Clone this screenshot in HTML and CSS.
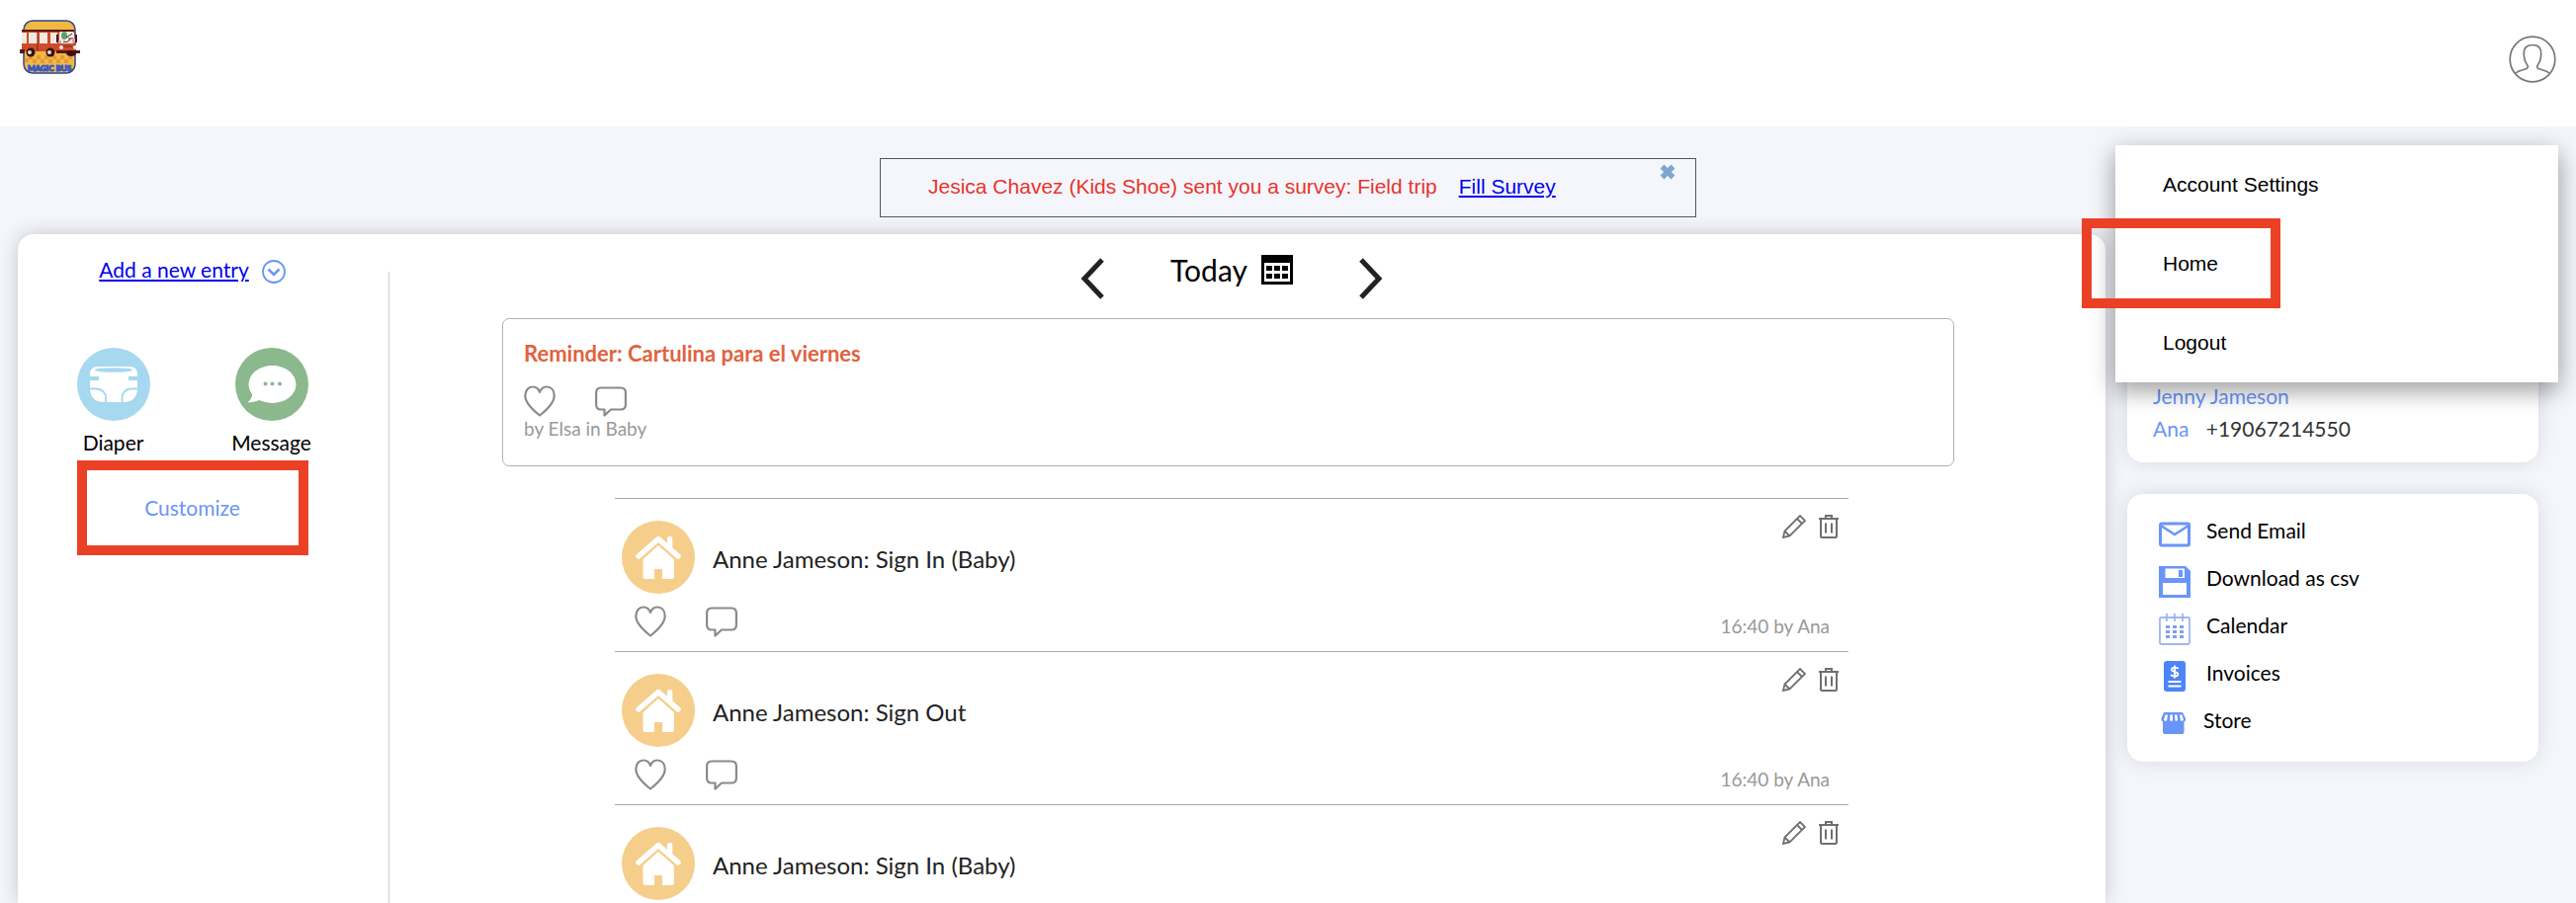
FILE: index.html
```html
<!DOCTYPE html>
<html lang="en">
<head>
    <meta charset="UTF-8">
    <meta name="viewport" content="width=device-width, initial-scale=1.0">
    <title>Magic Bus</title>
    <link rel="stylesheet" href="styles.css">
</head>
<body>
    <!-- shared icons -->
    <svg class="sprite" aria-hidden="true">
        <symbol id="heart" viewBox="0 0 32 32">
            <path d="M16 30.500C9 25 1.300 18 1.300 10.500C1.300 5 4.500 1.500 9 1.500C12.300 1.500 14.800 3.500 16 7C17.200 3.500 19.700 1.500 23 1.500C27.500 1.500 30.700 5 30.700 10.500C30.700 18 23 25 16 30.500Z" fill="none" stroke="#8a8a8a" stroke-width="2.200" stroke-linejoin="round"/>
        </symbol>
        <symbol id="comment" viewBox="0 0 32 32">
            <path d="M6 2.500H26Q30.900 2.500 30.900 7.500V19.500Q30.900 24.500 26 24.500H16L9.500 30.500V24.500H6Q1.100 24.500 1.100 19.500V7.500Q1.100 2.500 6 2.500Z" fill="none" stroke="#8a8a8a" stroke-width="2.200" stroke-linejoin="round"/>
        </symbol>
        <symbol id="pencil" viewBox="0 0 24 24">
            <path d="M1 23L2.500 16.500L18 1L23 6L7.500 21.500ZM15 4L20 9M2.500 16.500L7.500 21.500" fill="none" stroke="#6f6f6f" stroke-width="1.800"/>
        </symbol>
        <symbol id="trash" viewBox="0 0 20 24">
            <path d="M0 4H20M7 4V1H13V4M2 4V21.500Q2 23 3.500 23H16.500Q18 23 18 21.500V4M7 8.500V18.500M13 8.500V18.500" fill="none" stroke="#6f6f6f" stroke-width="2"/>
        </symbol>
        <symbol id="house" viewBox="0 0 74 74">
            <circle cx="37" cy="37" r="37" fill="#f6ce8b"/>
            <path d="M17 36L37 18.500L57 36" fill="none" stroke="#fff" stroke-width="5.500" stroke-linecap="round" stroke-linejoin="round"/>
            <path d="M46 18Q46 16 48 16H49.500Q51.300 16 51.300 18V29L46 24Z" fill="#fff"/>
            <path d="M21.500 39L37 25L52.800 39V57Q52.800 59 51 59H41V49H33V59H23.500Q21.500 59 21.500 57Z" fill="#fff"/>
        </symbol>
        <symbol id="chevron" viewBox="0 0 26 42">
            <path d="M23 2L5 21L23 40" fill="none" stroke="#222" stroke-width="5"/>
        </symbol>
    </svg>

    <header class="header">
        <a href="#" class="logo" aria-label="Magic Bus">
            <svg width="61" height="56" viewBox="0 0 61 56">
                <rect x="4" y="1" width="52" height="53" rx="9" fill="#efb942" stroke="#35458a" stroke-width="1.500"/>
                <path d="M9 36h4v4h-4zM17 36h4v4h-4zM25 36h4v4h-4zM33 36h4v4h-4zM41 36h4v4h-4zM49 36h4v4h-4zM5 39h4v4h-4zM13 40h4v4h-4zM21 40h4v4h-4zM29 40h4v4h-4zM37 40h4v4h-4zM45 40h4v4h-4z" fill="#e8973c"/>
                <path d="M2 10H55L57 32H2Z" fill="#ce4c2b"/>
                <path d="M2 10H55V12H2ZM0 30H5V34H0ZM37 31H61V34H37Z" fill="#5a1712"/>
                <path d="M2 13H7V24H2ZM9 13H18V24H9ZM20 13H28V24H20ZM31 13H38V24H31Z" fill="#f3e9e0"/>
                <rect x="40" y="12" width="15" height="12" rx="2" fill="#f7ece6"/>
                <path d="M37 15h2v8h-2zM56 15h2v8h-2z" fill="#4a1512"/>
                <ellipse cx="45" cy="16" rx="3" ry="4" fill="#55a36a"/>
                <path d="M44 22Q48 24 51 20M47 18L53 14M49 19H54" stroke="#4a1512" fill="none"/>
                <path d="M39 21h3v3h-3zM53 19h3v4h-3z" fill="#dc9cc0"/>
                <path d="M43 27H53M18 12V31" stroke="#7c211a"/>
                <circle cx="11" cy="33" r="4.500" fill="#38120f"/><circle cx="10" cy="33" r="2" fill="#e9ddd2"/>
                <circle cx="31" cy="33" r="4.500" fill="#38120f"/><circle cx="30" cy="33" r="2" fill="#e9ddd2"/>
                <ellipse cx="52" cy="34" rx="5" ry="3" fill="#38120f"/>
                <circle cx="42" cy="28" r="2" fill="#f7ece6"/><circle cx="56" cy="28" r="2" fill="#f7ece6"/>
                <text x="30" y="52" class="logo-text" text-anchor="middle">MAGIC BUS</text>
            </svg>
        </a>
        <button type="button" class="avatar" aria-label="Account">
            <svg width="48" height="48" viewBox="0 0 48 48" fill="none" stroke="#777" stroke-width="1.700">
                <circle cx="24" cy="24" r="22.800"/>
                <path d="M7 38C10 35 15 35 18 33.500Q20.500 32 18.500 29.500C16 26 15.300 22 15.300 18C15.300 12 19 9.500 24 9.500C29 9.500 32.700 12 32.700 18C32.700 22 32 26 29.500 29.500Q27.500 32 30 33.500C33 35 38 35 41 38"/>
            </svg>
        </button>
        <nav class="menu">
            <a href="#" class="menu-item">Account Settings</a>
            <a href="#" class="menu-item highlight">Home</a>
            <a href="#" class="menu-item">Logout</a>
        </nav>
    </header>

    <div class="survey">
        <span class="survey-text">Jesica Chavez (Kids Shoe) sent you a survey: Field trip</span>
        <a href="#">Fill Survey</a>
        <button type="button" class="survey-close" aria-label="Close">
            <svg width="16" height="16" viewBox="0 0 16 16"><path d="M2.500 2.500L13.500 13.500M13.500 2.500L2.500 13.500" stroke="#7fa6cf" stroke-width="5.500"/></svg>
        </button>
    </div>

    <div class="content">
        <main class="main">
            <aside class="side">
                <div class="new-entry">
                    <a href="#">Add a new entry</a>
                    <button type="button" aria-label="Show entries">
                        <svg width="24" height="24" viewBox="0 0 24 24" fill="none" stroke="#6a95f8"><circle cx="12" cy="12" r="11" stroke-width="1.800"/><path d="M6.500 9.500L12 15L17.500 9.500" stroke-width="2.600"/></svg>
                    </button>
                </div>
                <div class="tiles">
                    <button type="button" class="tile">
                        <svg width="74" height="74" viewBox="0 0 74 74">
                            <circle cx="37" cy="37" r="37" fill="#a6d8ef"/>
                            <path d="M13 27Q13 19 21 19H53Q61 19 61 27V40Q61 55 47 55H27Q13 55 13 40Z" fill="#fff"/>
                            <ellipse cx="37" cy="22.500" rx="19" ry="2.300" fill="#a6d8ef"/>
                            <path d="M13 29H22V33H13ZM52 29H61V33H52Z" fill="#a6d8ef"/>
                            <path d="M12 41.500H19Q29 42 29 51V56M62 41.500H55Q45.500 42 45.500 51V56" fill="none" stroke="#a6d8ef" stroke-width="1.800"/>
                        </svg>
                        Diaper
                    </button>
                    <button type="button" class="tile">
                        <svg width="74" height="74" viewBox="0 0 74 74">
                            <circle cx="37" cy="37" r="37" fill="#8bb88d"/>
                            <ellipse cx="37.500" cy="37" rx="24" ry="19" fill="#fff"/>
                            <path d="M17 45Q18 51 12.500 55.500Q20 55 27 52Z" fill="#fff"/>
                            <g fill="#8bb88d"><circle cx="30.500" cy="36.500" r="2"/><circle cx="37.500" cy="36.500" r="2"/><circle cx="45" cy="36.500" r="2"/></g>
                        </svg>
                        Message
                    </button>
                </div>
                <button type="button" class="customize">Customize</button>
            </aside>
            <div class="divider"></div>

            <section class="feed">
                <div class="date-nav">
                    <button type="button" aria-label="Previous day"><svg width="26" height="42"><use href="#chevron"/></svg></button>
                    <h1 class="date">
                        Today
                        <svg width="32" height="30" viewBox="0 0 32 30">
                            <path d="M0 0H32V30H0Z"/><path d="M3 8H29V27H3Z" fill="#fff"/>
                            <path d="M5 11h6v5H5zM13 11h6v5h-6zM21 11h6v5h-6zM5 19h6v5H5zM13 19h6v5h-6zM21 19h6v5h-6z"/>
                        </svg>
                    </h1>
                    <button type="button" aria-label="Next day"><svg class="flip" width="26" height="42"><use href="#chevron"/></svg></button>
                </div>

                <article class="reminder">
                    <h2>Reminder: Cartulina para el viernes</h2>
                    <div class="reactions">
                        <button type="button" aria-label="Like"><svg width="32" height="32"><use href="#heart"/></svg></button>
                        <button type="button" aria-label="Comment"><svg width="32" height="32"><use href="#comment"/></svg></button>
                    </div>
                    <p>by Elsa in Baby</p>
                </article>

                <div class="entries">
                    <article class="entry">
                        <svg class="entry-icon" width="74" height="74"><use href="#house"/></svg>
                        <p class="entry-title">Anne Jameson: Sign In (Baby)</p>
                        <div class="entry-tools">
                            <button type="button" aria-label="Edit"><svg width="24" height="24"><use href="#pencil"/></svg></button>
                            <button type="button" aria-label="Delete"><svg width="20" height="24"><use href="#trash"/></svg></button>
                        </div>
                        <div class="reactions">
                            <button type="button" aria-label="Like"><svg width="32" height="32"><use href="#heart"/></svg></button>
                            <button type="button" aria-label="Comment"><svg width="32" height="32"><use href="#comment"/></svg></button>
                        </div>
                        <p class="entry-time">16:40 by Ana</p>
                    </article>
                    <article class="entry">
                        <svg class="entry-icon" width="74" height="74"><use href="#house"/></svg>
                        <p class="entry-title">Anne Jameson: Sign Out</p>
                        <div class="entry-tools">
                            <button type="button" aria-label="Edit"><svg width="24" height="24"><use href="#pencil"/></svg></button>
                            <button type="button" aria-label="Delete"><svg width="20" height="24"><use href="#trash"/></svg></button>
                        </div>
                        <div class="reactions">
                            <button type="button" aria-label="Like"><svg width="32" height="32"><use href="#heart"/></svg></button>
                            <button type="button" aria-label="Comment"><svg width="32" height="32"><use href="#comment"/></svg></button>
                        </div>
                        <p class="entry-time">16:40 by Ana</p>
                    </article>
                    <article class="entry">
                        <svg class="entry-icon" width="74" height="74"><use href="#house"/></svg>
                        <p class="entry-title">Anne Jameson: Sign In (Baby)</p>
                        <div class="entry-tools">
                            <button type="button" aria-label="Edit"><svg width="24" height="24"><use href="#pencil"/></svg></button>
                            <button type="button" aria-label="Delete"><svg width="20" height="24"><use href="#trash"/></svg></button>
                        </div>
                    </article>
                </div>
            </section>
        </main>

        <aside class="right">
            <div class="card contacts">
                <p><a href="#">Jenny Jameson</a></p>
                <p><a href="#">Ana</a> <span>+19067214550</span></p>
            </div>
            <div class="card actions">
                <a href="#">
                    <svg width="32" height="32" viewBox="0 0 32 32"><rect x="1.500" y="5" width="29" height="22" rx="1.500" fill="none" stroke="#6a95f8" stroke-width="3"/><path d="M2 7L16 16L30 7" fill="none" stroke="#6a95f8" stroke-width="2.600"/></svg>
                    Send Email
                </a>
                <a href="#">
                    <svg width="32" height="32" viewBox="0 0 32 32"><path d="M0 0H27L32 5V32H0Z" fill="#6a95f8"/><path d="M6.500 2.500H26V12H6.500ZM4 17H28V29H4Z" fill="#fff"/><path d="M20 4H24V11H20Z" fill="#6a95f8"/></svg>
                    Download as csv
                </a>
                <a href="#">
                    <svg width="32" height="32" viewBox="0 0 32 32"><rect x="1" y="4" width="30" height="27" rx="1.500" fill="none" stroke="#9db7f2" stroke-width="1.800"/><path d="M8 0V8M16 0V8M24 0V8" stroke="#9db7f2" stroke-width="1.800"/><path d="M7 12h4v3H7zM14 12h4v3h-4zM21 12h4v3h-4zM7 17h4v3H7zM14 17h4v3h-4zM21 17h4v3h-4zM7 22h4v3H7zM14 22h4v3h-4zM21 22h4v3h-4z" fill="#7f9fec"/></svg>
                    Calendar
                </a>
                <a href="#">
                    <svg width="32" height="32" viewBox="0 0 32 32"><rect x="5" y="0" width="22" height="31" rx="3" fill="#4d84f7"/><path d="M19.500 8C19 6.500 13 5.500 13 8.700C13 11.500 19.300 10.500 19.300 13.500C19.300 16.500 13 16 12.300 13.800M16 4.500V17.500" fill="none" stroke="#fff" stroke-width="1.900"/><path d="M9.500 21H22.500M9.500 25.500H22.500" stroke="#fff" stroke-width="1.800"/></svg>
                    Invoices
                </a>
                <a href="#">
                    <svg width="29" height="32" viewBox="0 0 29 32"><path d="M5 4H24L27 10V11.500Q27 13 25.500 13.500V24Q25.500 26 23.500 26H6Q4 26 4 24V13.500Q2.500 13 2.500 11.500V10Z" fill="#6a95f8"/><path d="M6.500 6.500H9L8 12.500Q6 13 5 12ZM11.500 6.500H14V12.500Q12 13 11 12ZM16 6.500H18.500L19 12Q18 13 16.500 12.500ZM21 6.500H23.500L25 12Q23.500 13 22 12.500Z" fill="#fff"/></svg>
                    Store
                </a>
            </div>
        </aside>
    </div>
</body>
</html>
```

FILE: styles.css
```css
*, *::after {
    box-sizing: border-box;
}
body {
    display: flex;
    flex-direction: column;
    height: 100vh;
    margin: 0;
    overflow: hidden;
    background-color: #f4f6fc;
    font-family: Avenir, Lato, sans-serif;
    font-size: 21px;
    line-height: 24px;
    color: #000;
}
h1, h2, p {
    margin: 0;
}
button {
    padding: 0;
    border: 0;
    background: none;
    font: inherit;
    color: inherit;
    cursor: pointer;
}
svg {
    display: block;
    flex: none;
}
.sprite {
    position: absolute;
    width: 0;
    height: 0;
}

/* header */
.header {
    position: relative;
    z-index: 2;
    display: flex;
    flex: none;
    justify-content: space-between;
    align-items: flex-start;
    height: 128px;
    padding: 20px;
    background-color: #fff;
}
.logo-text {
    font-size: 8px;
    font-weight: 900;
    fill: #3457c8;
    stroke: #3457c8;
    stroke-width: 1px;
}
.avatar {
    margin-top: 16px;
}
.menu {
    position: absolute;
    top: 147px;
    right: 18px;
    width: 448px;
    background-color: #fff;
    box-shadow: 0 10px 20px rgba(0, 0, 0, 0.19), 0 6px 26px rgba(0, 0, 0, 0.23);
    font-family: Helvetica, "Liberation Sans", sans-serif;
}
.menu-item {
    display: block;
    position: relative;
    padding: 28px 48px;
    color: #000;
    text-decoration: none;
}
.highlight::after {
    content: "";
    position: absolute;
    top: -6px;
    left: -34px;
    width: 201px;
    height: 91px;
    border: 10px solid #ea4126;
}

/* survey banner */
.survey {
    position: relative;
    display: flex;
    flex: none;
    gap: 22px;
    width: 826px;
    height: 60px;
    margin: 32px auto 17px;
    padding: 16px 48px;
    border: 1px solid #555;
    font-family: Helvetica, "Liberation Sans", sans-serif;
}
.survey-text {
    color: #e9332a;
}
.survey a, .new-entry a {
    color: #0000ee;
}
.survey-close {
    position: absolute;
    top: 5px;
    right: 20px;
}

/* page columns */
.content {
    display: flex;
    flex: 1;
    gap: 22px;
    min-height: 0;
    padding: 0 38px 0 18px;
}
.main {
    display: flex;
    flex: 1;
    overflow: hidden;
    border-radius: 16px 16px 0 0;
    background-color: #fff;
    box-shadow: 0 0 20px rgba(0, 0, 0, 0.2);
}
.side {
    display: flex;
    flex-direction: column;
    align-items: center;
    width: 375px;
    padding: 24px 22px 0 0;
}
.new-entry {
    display: flex;
    align-items: flex-start;
    gap: 13px;
    height: 28px;
}
.new-entry button {
    margin-top: 2px;
}
.tiles {
    display: flex;
    margin-top: 63px;
}
.tile {
    display: flex;
    flex-direction: column;
    align-items: center;
    gap: 10px;
    width: 160px;
}
.customize {
    width: 234px;
    height: 96px;
    margin-top: 6px;
    border: 10px solid #ea4126;
    color: #6a95f8;
}
.divider {
    width: 1px;
    margin-top: 38px;
    background-color: #ccc;
}

/* feed */
.feed {
    flex: 1;
    padding: 20px 153px 0 114px;
}
.date-nav {
    display: flex;
    justify-content: center;
    align-items: flex-start;
    gap: 66px;
    padding-left: 7px;
}
.date-nav button {
    margin-top: 4px;
}
.date {
    display: flex;
    align-items: center;
    gap: 14px;
    font-size: 30px;
    line-height: 32px;
    font-weight: normal;
}
.flip {
    transform: scaleX(-1);
}
.reminder {
    height: 150px;
    margin-top: 19px;
    padding: 23px 21px;
    border: 1px solid #b0b0b0;
    border-radius: 7px;
}
.reminder h2 {
    font-size: 22px;
    line-height: 24px;
    color: #e0633f;
}
.reactions {
    display: flex;
    align-items: flex-start;
    gap: 40px;
}
.reminder .reactions {
    margin-top: 20px;
}
.reminder p, .entry-time {
    font-size: 19px;
    line-height: 24px;
    color: #999;
}
.entries {
    margin: 32px 107px 0 114px;
}
.entry {
    display: grid;
    grid-template-columns: 74px 1fr auto;
    grid-template-rows: 96px 58px;
    column-gap: 18px;
    padding: 0 10px 0 7px;
    border-top: 1px solid #aaa;
}
.entry-icon {
    align-self: end;
}
.entry-title {
    padding-top: 48px;
    font-size: 24px;
    line-height: 26px;
    color: #222;
}
.entry-tools {
    display: flex;
    align-items: flex-start;
    justify-content: flex-end;
    gap: 13px;
    padding-top: 16px;
}
.entry .reactions {
    grid-column: 1 / 3;
    padding: 12px 0 0 13px;
}
.entry-time {
    padding: 21px 9px 0 0;
    text-align: right;
}

/* right column */
.right {
    width: 416px;
}
.card {
    border-radius: 16px;
    background-color: #fff;
    box-shadow: 0 0 20px rgba(0, 0, 0, 0.12);
}
.card a {
    text-decoration: none;
}
.contacts {
    display: flex;
    flex-direction: column;
    justify-content: flex-end;
    gap: 9px;
    height: 231px;
    padding: 0 26px 22px;
    color: #333;
}
.contacts a {
    margin-right: 12px;
    color: #6a95f8;
}
.actions {
    display: flex;
    flex-direction: column;
    gap: 16px;
    margin-top: 32px;
    padding: 25px 32px 22px;
}
.actions a {
    display: flex;
    gap: 16px;
    height: 32px;
    color: #000;
}
```
